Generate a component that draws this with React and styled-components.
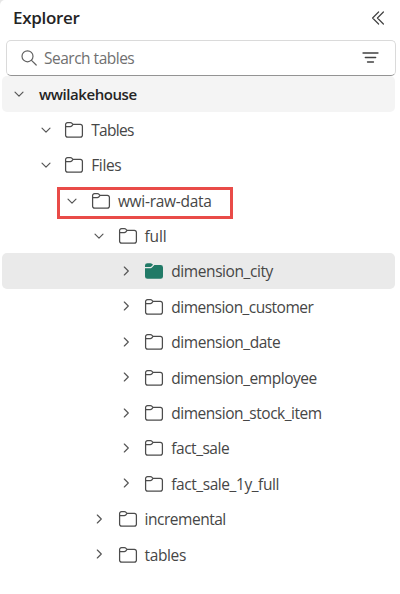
import React from 'react';
import styled, { createGlobalStyle } from 'styled-components';

const GlobalStyle = createGlobalStyle`
  * { box-sizing: border-box; }
  body { margin: 0; background: #e6e6e6; overflow: hidden; }
`;

const Panel = styled.aside`
  display: flex;
  flex-direction: column;
  width: 400px;
  height: 594px;
  border-top-left-radius: 5px;
  background: #fff;
  color: #424242;
  font-family: 'Open Sans', 'Noto Sans', sans-serif;
  font-size: 15.5px;
`;

const Header = styled.header`
  display: flex;
  align-items: center;
  justify-content: space-between;
  height: 40px;
  padding: 0 15px 4px 13px;
`;

const Title = styled.h1`
  margin: 0;
  color: #242424;
  font-size: 17px;
  font-weight: 600;
  line-height: 24px;
  letter-spacing: -0.3px;
`;

const IconButton = styled.button`
  display: flex;
  padding: 0;
  border: 0;
  background: none;
  color: #424242;
`;

const SearchBox = styled.div`
  display: flex;
  align-items: center;
  height: 35.5px;
  margin: 0 4.5px 0 6px;
  padding: 0 15.5px 0 14px;
  border: 1px solid #dadada;
  border-bottom-color: #939393;
  border-radius: 5px;
`;

const SearchText = styled.span`
  flex: 1;
  padding: 1px 0 0 7px;
  color: #707070;
  line-height: 20px;
  letter-spacing: -0.5px;
`;

const Tree = styled.ul`
  display: flex;
  flex-direction: column;
  margin: 0.8px 5.5px 0 1.5px;
  padding: 0;
  list-style: none;
`;

const backgrounds = { root: '#f4f4f4', selected: '#eaeaea' };

const Row = styled.li`
  position: relative;
  display: flex;
  align-items: center;
  height: 35.4px;
  padding-left: ${({ $depth }) => 11.5 + $depth * 26.7}px;
  border-radius: 5px;
  background: ${({ $state }) => backgrounds[$state] || 'transparent'};
`;

const Chevron = styled.svg`
  flex: none;
  width: 12px;
  height: 12px;
  margin-top: ${({ $open }) => ($open ? 1 : 0)}px;
  fill: none;
  stroke: #555;
  stroke-width: 1.15;
  stroke-linecap: round;
  stroke-linejoin: round;
`;

const FolderSvg = styled.svg`
  flex: none;
  width: 20px;
  height: 18px;
  margin: 1px 0 0 12.5px;
  color: ${({ $filled }) => ($filled ? '#217a67' : '#4c4c4c')};
`;

const Label = styled.span`
  margin-left: ${({ $root }) => ($root ? 14 : 7)}px;
  padding-top: 1px;
  color: ${({ $root }) => ($root ? '#242424' : '#464646')};
  font-size: ${({ $root }) => ($root ? 15 : 15.5)}px;
  font-weight: ${({ $root }) => ($root ? 600 : 400)};
  line-height: 20px;
  letter-spacing: ${({ $tracking }) => $tracking}px;
  white-space: nowrap;
`;

const Highlight = styled.span`
  position: absolute;
  top: 4.5px;
  left: 55.5px;
  width: 176px;
  height: 32px;
  border: 3px solid #e94b48;
  pointer-events: none;
`;

function Folder({ filled }) {
  return (
    <FolderSvg viewBox="0 0 20 18" $filled={filled}>
      {filled ? (
        <>
          <path d="M1 5V3.6A2.4 2.4 0 0 1 3.4 1.2H6.6C7.3 1.2 8.6 2 9 2.7L7.6 4.3Q7 5 6.2 5Z" fill="currentColor" />
          <path d="M1 6.2H6.5Q7.5 6.2 8.2 5.3L10.4 3H16.6A2.4 2.4 0 0 1 19 5.4V14.4A2.4 2.4 0 0 1 16.6 16.8H3.4A2.4 2.4 0 0 1 1 14.4Z" fill="currentColor" />
        </>
      ) : (
        <g fill="none" stroke="currentColor" strokeWidth="1.25" strokeLinejoin="round">
          <path d="M1.6 4V14A2 2 0 0 0 3.6 16.2H16.4A2 2 0 0 0 18.4 14V5.5A2 2 0 0 0 16.4 3.4H9.1L7.7 2.1Q7.1 1.6 6.4 1.6H3.6A2 2 0 0 0 1.6 4Z" />
          <path d="M1.6 5.6H6.3Q7.1 5.6 7.7 5L9.1 3.4" />
        </g>
      )}
    </FolderSvg>
  );
}

const items = [
  { name: 'wwilakehouse', depth: 0, open: true, state: 'root', tracking: -0.44 },
  { name: 'Tables', depth: 1, open: true, tracking: -0.7 },
  { name: 'Files', depth: 1, open: true, tracking: -0.35 },
  { name: 'wwi-raw-data', depth: 2, open: true, highlighted: true, tracking: -0.28 },
  { name: 'full', depth: 3, open: true, tracking: -0.2 },
  { name: 'dimension_city', depth: 4, state: 'selected', tracking: -0.42 },
  { name: 'dimension_customer', depth: 4, tracking: -0.53 },
  { name: 'dimension_date', depth: 4, tracking: -0.45 },
  { name: 'dimension_employee', depth: 4, tracking: -0.46 },
  { name: 'dimension_stock_item', depth: 4, tracking: -0.48 },
  { name: 'fact_sale', depth: 4, tracking: -0.48 },
  { name: 'fact_sale_1y_full', depth: 4, tracking: -0.43 },
  { name: 'incremental', depth: 3, tracking: -0.48 },
  { name: 'tables', depth: 3, tracking: -0.38 },
];

function TreeRow({ name, depth, open, state, highlighted, tracking }) {
  const isRoot = state === 'root';
  return (
    <Row $depth={depth} $state={state}>
      <Chevron viewBox="0 0 12 12" $open={open}>
        <path d={open ? 'M2 4.2L6 8.2L10 4.2' : 'M4.3 2L8.3 6L4.3 10'} />
      </Chevron>
      {!isRoot && <Folder filled={state === 'selected'} />}
      <Label $root={isRoot} $tracking={tracking}>{name}</Label>
      {highlighted && <Highlight />}
    </Row>
  );
}

export default function App() {
  return (
    <>
      <GlobalStyle />
      <Panel>
        <Header>
          <Title>Explorer</Title>
          <IconButton aria-label="Collapse">
            <svg width="14" height="14" viewBox="0 0 14 14" fill="none" stroke="currentColor" strokeWidth="1.2" strokeLinecap="round" strokeLinejoin="round">
              <path d="M7.6 1L1.6 7L7.6 13M12.4 1L6.4 7L12.4 13" />
            </svg>
          </IconButton>
        </Header>
        <SearchBox>
          <svg width="16" height="16" viewBox="0 0 16 16" fill="none" stroke="#616161" strokeWidth="1.2" strokeLinecap="round">
            <circle cx="6.5" cy="6.3" r="5.5" />
            <path d="M10.5 10.3L15.2 15" />
          </svg>
          <SearchText>Search tables</SearchText>
          <IconButton aria-label="Filter">
            <svg width="17" height="12" viewBox="0 0 17 12" fill="none" stroke="currentColor" strokeWidth="1.3" strokeLinecap="round">
              <path d="M1 1H16M3.3 5.5H13.7M5.5 10H11.5" />
            </svg>
          </IconButton>
        </SearchBox>
        <Tree>
          {items.map((item) => <TreeRow key={item.name} {...item} />)}
        </Tree>
      </Panel>
    </>
  );
}
